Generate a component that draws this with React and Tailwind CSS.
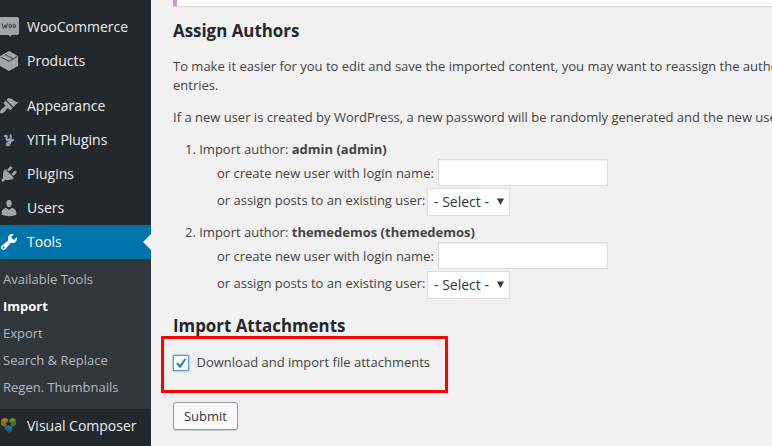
import React from "react";

function DashIcon({ d, color = "#a0a5aa" }) {
  return (
    <svg viewBox="0 0 20 20" width="20" height="20" fill={color}>
      <path d={d} />
    </svg>
  );
}

const APPEARANCE =
  "M14.48 11.06L7.41 3.99l1.5-1.5c.5-.56 2.3-.47 3.51.32 1.21.8 1.43 1.28 2.91 2.1 1.18.64 2.45 1.26 4.45.85zm-.71.71L6.7 4.7 4.93 6.47c-.39.39-.39 1.02 0 1.41l1.06 1.06c.39.39.39 1.03 0 1.42-.6.6-1.43 1.11-2.21 1.69-.35.26-.7.53-1.01.84C1.43 14.23.4 16.08 1.4 17.07c.99 1 2.84-.03 4.18-1.36.31-.31.58-.66.85-1.02.57-.78 1.08-1.61 1.69-2.21.39-.39 1.02-.39 1.41 0l1.06 1.06c.39.39 1.02.39 1.41 0z";
const PLUGINS =
  "M13.11 4.36L9.87 7.6 8 5.73l3.24-3.24c.35-.34 1.05-.2 1.56.32.52.51.66 1.21.31 1.55zm-8 1.77l.91-1.12 9.01 9.01-1.19.84c-.71.71-2.63 1.16-3.82 1.16H6.14L4.9 17.26c-.59.59-1.54.59-2.12 0-.59-.58-.59-1.53 0-2.12l1.24-1.24v-3.88c0-1.13.4-3.19 1.09-3.89zm7.26 3.97l3.24-3.24c.34-.35 1.04-.21 1.55.31.52.51.66 1.21.31 1.55l-3.24 3.25z";
const USERS =
  "M10 9.25c-2.27 0-2.73-3.44-2.73-3.44C7 4.02 7.82 2 9.97 2c2.16 0 2.98 2.02 2.71 3.81 0 0-.41 3.44-2.68 3.44zm0 2.57L12.72 10c2.39 0 4.52 2.33 4.52 4.53v2.49s-3.65 1.13-7.24 1.13c-3.65 0-7.24-1.13-7.24-1.13v-2.49c0-2.25 1.94-4.48 4.47-4.48z";
const TOOLS =
  "M16.68 9.77c-1.34 1.34-3.3 1.67-4.95.99l-5.41 6.52c-.99.99-2.59.99-3.58 0s-.99-2.59 0-3.57l6.52-5.42c-.68-1.65-.35-3.61.99-4.95 1.28-1.28 3.12-1.62 4.72-1.06l-2.89 2.89 2.82 2.82 2.86-2.87c.53 1.58.18 3.39-1.08 4.65zM3.81 16.21c.4.39 1.04.39 1.43 0 .4-.4.4-1.04 0-1.43-.39-.4-1.03-.4-1.43 0-.39.39-.39 1.03 0 1.43z";

function WooIcon() {
  return (
    <svg viewBox="0 0 20 20" width="20" height="20" fill="none">
      <path d="M1 0h17a2 2 0 0 1 2 2v14a2 2 0 0 1-2 2h-6l.3 2-2.8-2H1z" fill="#a0a5aa" />
      <g stroke="#3c4146" strokeWidth="1" strokeLinejoin="round" strokeLinecap="round">
        <path d="M3.3 6.8l1.1 4.7 1.9-3.6.8 3.4c.2-1.8.7-3.4 1.4-4.6" />
        <ellipse cx="11.2" cy="9" rx="1.2" ry="2" />
        <ellipse cx="15.2" cy="9" rx="1.2" ry="2" />
      </g>
    </svg>
  );
}

function BoxIcon() {
  return (
    <svg viewBox="0 0 20 20" width="20" height="20" fill="none">
      <path d="M10 0l9 4.9v10.2L10 20l-9-4.9V4.9z" fill="#a0a5aa" />
      <path d="M1.8 6.2l8.2 4 8.2-4.6M6 3.6l8 4" stroke="#32373c" strokeWidth="0.9" />
    </svg>
  );
}

function YithIcon() {
  return (
    <svg viewBox="0 0 20 20" width="20" height="20" fill="none">
      <circle cx="10" cy="10" r="7" fill="#1f2a36" />
      <g stroke="#a0a5aa" strokeLinecap="round" strokeLinejoin="round">
        <path d="M6 6c1.7-.8 1.9.4 1.6 2-.3 2.6 1.4 2.9 3.2 1.2" strokeWidth="2.1" />
        <path d="M11.7 5.2c.1 4.3-.2 8.2-1.5 9.6-1.2 1.1-3.1.5-2.4-.8.8-1.6 3.8-2.3 6.4-4.2" strokeWidth="1.9" />
      </g>
    </svg>
  );
}

function ComposerIcon() {
  return (
    <svg viewBox="0 0 20 20" width="20" height="20">
      <path d="M2 4l3.8-2L9.2 3.6v2L7.3 6.8v3.4L5.6 11 2 8.8z" fill="#8f6a22" />
      <path d="M2 4l3.8-2 3.4 1.6-3.7 1.8z" fill="#b5831f" />
      <path d="M10 3.7L13.7 2l3.4 2v4.4L13.6 11l-1.8-1V7L10 6z" fill="#4e6b2b" />
      <path d="M10 3.7L13.7 2l3.4 2-3.5 1.8z" fill="#6c8c38" />
      <path d="M6 11.4l3.6-2.2 3.6 2.2v3.4L9.6 18v-2.7L6 13.4z" fill="#15668a" />
      <path d="M6 11.4l3.6-2.2 3.6 2.2-3.6 1.9z" fill="#167ea8" />
    </svg>
  );
}

function MenuItem({ icon, label, active }) {
  return (
    <a
      className={
        active
          ? "flex h-[34px] items-center justify-between bg-[#0073aa] text-white"
          : "flex h-[34px] items-center justify-between text-[#eeeeee]"
      }
    >
      <span className="flex items-center gap-2">
        <span className="-ml-px size-5 shrink-0">{icon}</span>
        <span className="text-[14px] leading-[18px] whitespace-nowrap">{label}</span>
      </span>
      {active && (
        <svg width="8" height="16" viewBox="0 0 8 16" fill="#f1f1f1">
          <path d="M8 0v16L0 8z" />
        </svg>
      )}
    </a>
  );
}

function Sidebar() {
  const links = ["Available Tools", "Import", "Export", "Search & Replace", "Regen. Thumbnails"];
  return (
    <nav className="h-full w-[151px] shrink-0 overflow-hidden bg-[#23282d] pt-[10px]">
      <MenuItem icon={<WooIcon />} label="WooCommerce" />
      <MenuItem icon={<BoxIcon />} label="Products" />
      <div className="h-[11px]" />
      <MenuItem icon={<DashIcon d={APPEARANCE} />} label="Appearance" />
      <MenuItem icon={<YithIcon />} label="YITH Plugins" />
      <MenuItem icon={<DashIcon d={PLUGINS} />} label="Plugins" />
      <MenuItem icon={<DashIcon d={USERS} />} label="Users" />
      <MenuItem icon={<DashIcon d={TOOLS} color="#fff" />} label="Tools" active />
      <div className="flex h-[150px] flex-col bg-[#32373c] pt-[7px] pl-[3px] text-[13px]">
        {links.map((l) => (
          <a
            key={l}
            className={
              l === "Import"
                ? "h-[27px] leading-[27px] font-bold whitespace-nowrap text-white"
                : "h-[27px] leading-[27px] whitespace-nowrap text-[#b4b9be]"
            }
          >
            {l}
          </a>
        ))}
      </div>
      <MenuItem icon={<ComposerIcon />} label="Visual Composer" />
    </nav>
  );
}

function Author({ n, name }) {
  return (
    <li className="flex h-[83px] flex-col">
      <div className="h-5 pl-3 leading-5">
        {n}. Import author: <strong className="font-bold">{name}</strong>
      </div>
      <div className="flex h-[27px] gap-[5px] pl-11">
        <span className="h-[27px] w-[216px] leading-[29px]">or create new user with login name:</span>
        <span className="h-[27px] w-[170px] border border-[#dddddd] bg-white shadow-[inset_0_1px_2px_rgba(0,0,0,0.07)]" />
      </div>
      <div className="mt-0.5 flex h-7 gap-px pl-11">
        <span className="w-[209px] leading-[25px]">or assign posts to an existing user:</span>
        <span className="flex h-7 w-[83px] items-center justify-between border border-[#dddddd] bg-white pr-[5px] pl-1.5 text-[14px] text-[#32373c]">
          <span className="leading-7">- Select -</span>
          <svg width="7" height="7" viewBox="0 0 7 7" fill="#32373c" className="mb-px">
            <path d="M0 .5h7L3.5 7z" />
          </svg>
        </span>
      </div>
    </li>
  );
}

export default function App() {
  return (
    <div className="flex h-[446px] w-[772px] overflow-hidden bg-[#f1f1f1] font-['Open_Sans',sans-serif] text-[13px] text-[#444444]">
      <Sidebar />
      <main className="relative flex h-full min-w-0 flex-1 flex-col overflow-hidden pl-[22px] whitespace-nowrap">
        <div className="h-1.5 shrink-0 border-l-4 border-[#cc99c2] bg-white shadow-[0_1px_1px_rgba(0,0,0,0.1)]" />
        <h2 className="mt-3 h-[26px] text-[16.9px] leading-[26px] font-bold text-[#23282d]">Assign Authors</h2>
        <p className="mt-[13px] leading-[19px]">
          To make it easier for you to edit and save the imported content, you may want to reassign the author
          <br />
          entries.
        </p>
        <p className="mt-[13px] leading-[19px]">
          If a new user is created by WordPress, a new password will be randomly generated and the new user
        </p>
        <ol className="mt-3">
          <Author n={1} name="admin (admin)" />
          <Author n={2} name="themedemos (themedemos)" />
        </ol>
        <h2 className="mt-2 h-[26px] text-[16.9px] leading-[26px] font-bold text-[#23282d]">Import Attachments</h2>
        <label className="mt-4 flex h-4 items-center gap-[7.5px]">
          <span className="flex size-4 items-center justify-center border border-[#5b9dd9] bg-white shadow-[0_0_2px_rgba(30,140,190,0.8)]">
            <svg width="12" height="12" viewBox="0 0 12 12" fill="#1e8cbe">
              <path d="M1 6.4l2-.9 2 2.3L9.4 1.4l2 .9L5.7 10.8H4.4z" />
            </svg>
          </span>
          <span>Download and import file attachments</span>
        </label>
        <button className="mt-[31px] flex h-7 w-[65px] items-center justify-center rounded-[3px] border border-[#999999] bg-[#fafafa] pt-0.5 text-[13px] text-[#32373c] shadow-[0_1px_0_#cccccc]">
          Submit
        </button>
        <div className="absolute top-[336px] left-[10px] h-[57px] w-[287px] border-3 border-[#ff0000]" />
      </main>
    </div>
  );
}
